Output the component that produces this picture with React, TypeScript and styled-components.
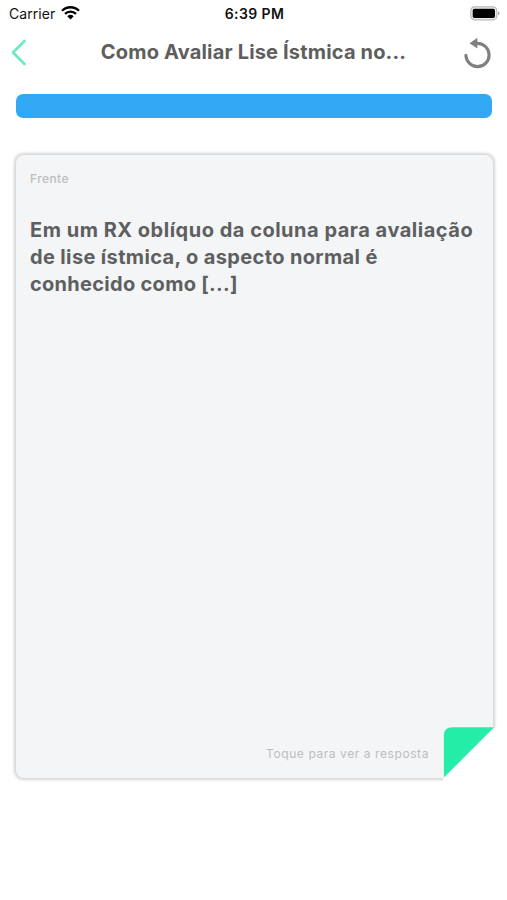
import React from "react";
import styled, { createGlobalStyle } from "styled-components";

const GlobalStyle = createGlobalStyle`
  * { box-sizing: border-box; }
  html, body { margin: 0; background: #fff; }
  body { font-family: Inter, "Liberation Sans", sans-serif; overflow: hidden; }
`;

const Screen = styled.main`
  width: 507px;
  height: 900px;
  display: flex;
  flex-direction: column;
  background: #fff;
`;

const StatusBar = styled.div`
  height: 27px;
  display: grid;
  grid-template-columns: 1fr auto 1fr;
  align-items: center;
  padding: 0 7px 0 9px;
  color: #111;
`;

const Carrier = styled.div`
  display: flex;
  align-items: center;
  gap: 6px;
  font-size: 14px;
  letter-spacing: 0.05px;
`;

const Clock = styled.time`
  font-size: 14px;
  font-weight: 600;
  line-height: 17px;
  letter-spacing: 0.42px;
`;

const BatterySlot = styled.div`
  display: flex;
  justify-content: flex-end;
`;

const Header = styled.header`
  height: 49px;
  display: grid;
  grid-template-columns: 48px 1fr 48px;
  align-items: center;
`;

const IconButton = styled.button`
  height: 48px;
  padding: 0;
  border: 0;
  background: none;
  display: flex;
  align-items: center;
`;

const Title = styled.h1`
  margin: 0;
  text-align: center;
  white-space: nowrap;
  font-size: 20px;
  line-height: 28px;
  font-weight: 700;
  letter-spacing: 0.17px;
  color: #5e5e5e;
`;

const Progress = styled.div`
  height: 24.5px;
  margin: 17.5px 15px 0 15.5px;
  border-radius: 7px;
  background: #32a8f5;
`;

const Card = styled.section`
  position: relative;
  width: 477px;
  height: 623px;
  margin: 36.5px 0 0 15.5px;
  padding: 15px 14.5px;
  display: flex;
  flex-direction: column;
  border-radius: 8px;
  background: #f3f5f7;
  box-shadow: 0 0 3px 1.5px rgba(0, 0, 0, 0.17);
`;

const Side = styled.div`
  font-size: 12px;
  line-height: 18px;
  font-weight: 500;
  letter-spacing: 0.4px;
  color: #bcbec0;
`;

const Question = styled.div`
  margin-top: 29px;
  color: #5e5f60;
  font-size: 20px;
  font-weight: 700;
  line-height: 27.3px;
`;

const Line = styled.div<{ $spacing: number }>`
  white-space: nowrap;
  letter-spacing: ${(p) => p.$spacing}px;
`;

const Hint = styled.div`
  margin: auto 49px 0 0;
  text-align: right;
  font-size: 12px;
  line-height: 18px;
  letter-spacing: 0.58px;
  color: #bcbec0;
`;

const Fold = styled.svg`
  position: absolute;
  right: -4px;
  bottom: -4px;
`;

const lines = [
  { text: "Em um RX oblíquo da coluna para avaliação", spacing: 0.51 },
  { text: "de lise ístmica, o aspecto normal é", spacing: 0.36 },
  { text: "conhecido como [...]", spacing: 0.29 },
];

const Wifi = () => (
  <svg width="19" height="15" viewBox="0 0 19 15">
    <g fill="none" stroke="#000" strokeWidth="2.3">
      <path d="M1 4.8A12 12 0 0 1 18 4.8" />
      <path d="M4 7.9A7.8 7.8 0 0 1 15 7.9" />
    </g>
    <path d="M6.3 10.2A4.7 4.7 0 0 1 12.7 10.2L9.5 13.5Z" fill="#000" />
  </svg>
);

const Battery = () => (
  <svg width="30" height="15" viewBox="0 0 30 15">
    <rect x="0.8" y="0.8" width="26" height="13" rx="3.8" fill="#eee" stroke="#b9b9b9" strokeWidth="1.2" />
    <rect x="2.7" y="2.7" width="22.3" height="9.3" rx="1.7" fill="#000" />
    <path d="M28 5.2Q31.2 7.3 28 9.4Z" fill="#aaa" />
  </svg>
);

export default function App() {
  return (
    <>
      <GlobalStyle />
      <Screen>
        <StatusBar>
          <Carrier>Carrier <Wifi /></Carrier>
          <Clock>6:39 PM</Clock>
          <BatterySlot><Battery /></BatterySlot>
        </StatusBar>
        <Header>
          <IconButton aria-label="Voltar">
            <svg width="30" height="30" viewBox="0 0 30 30">
              <path d="M24.5 4L13 15.5L24.5 27" fill="none" stroke="#6cebc0" strokeWidth="2.7" strokeLinecap="round" strokeLinejoin="round" />
            </svg>
          </IconButton>
          <Title>Como Avaliar Lise Ístmica no...</Title>
          <IconButton aria-label="Reiniciar">
            <svg width="34" height="34" viewBox="0 0 34 34">
              <path d="M6.9 20.3A11.6 11.6 0 1 0 18.5 8.4H16" fill="none" stroke="#808080" strokeWidth="3.1" strokeLinecap="round" />
              <path d="M10.5 8.2L18.4 2.8V13.6Z" fill="#808080" />
            </svg>
          </IconButton>
        </Header>
        <Progress />
        <Card>
          <Side>Frente</Side>
          <Question>
            {lines.map((l) => <Line key={l.text} $spacing={l.spacing}>{l.text}</Line>)}
          </Question>
          <Hint>Toque para ver a resposta</Hint>
          <Fold width="56" height="56" viewBox="0 0 56 56">
            <path d="M54.5 0L2 52.5V56H56V0Z" fill="#fff" />
            <path d="M2.6 52V9.5Q2.6 1 11.1 1H53.6Z" fill="#24eda7" stroke="#fff" strokeWidth="0.5" />
          </Fold>
        </Card>
      </Screen>
    </>
  );
}
